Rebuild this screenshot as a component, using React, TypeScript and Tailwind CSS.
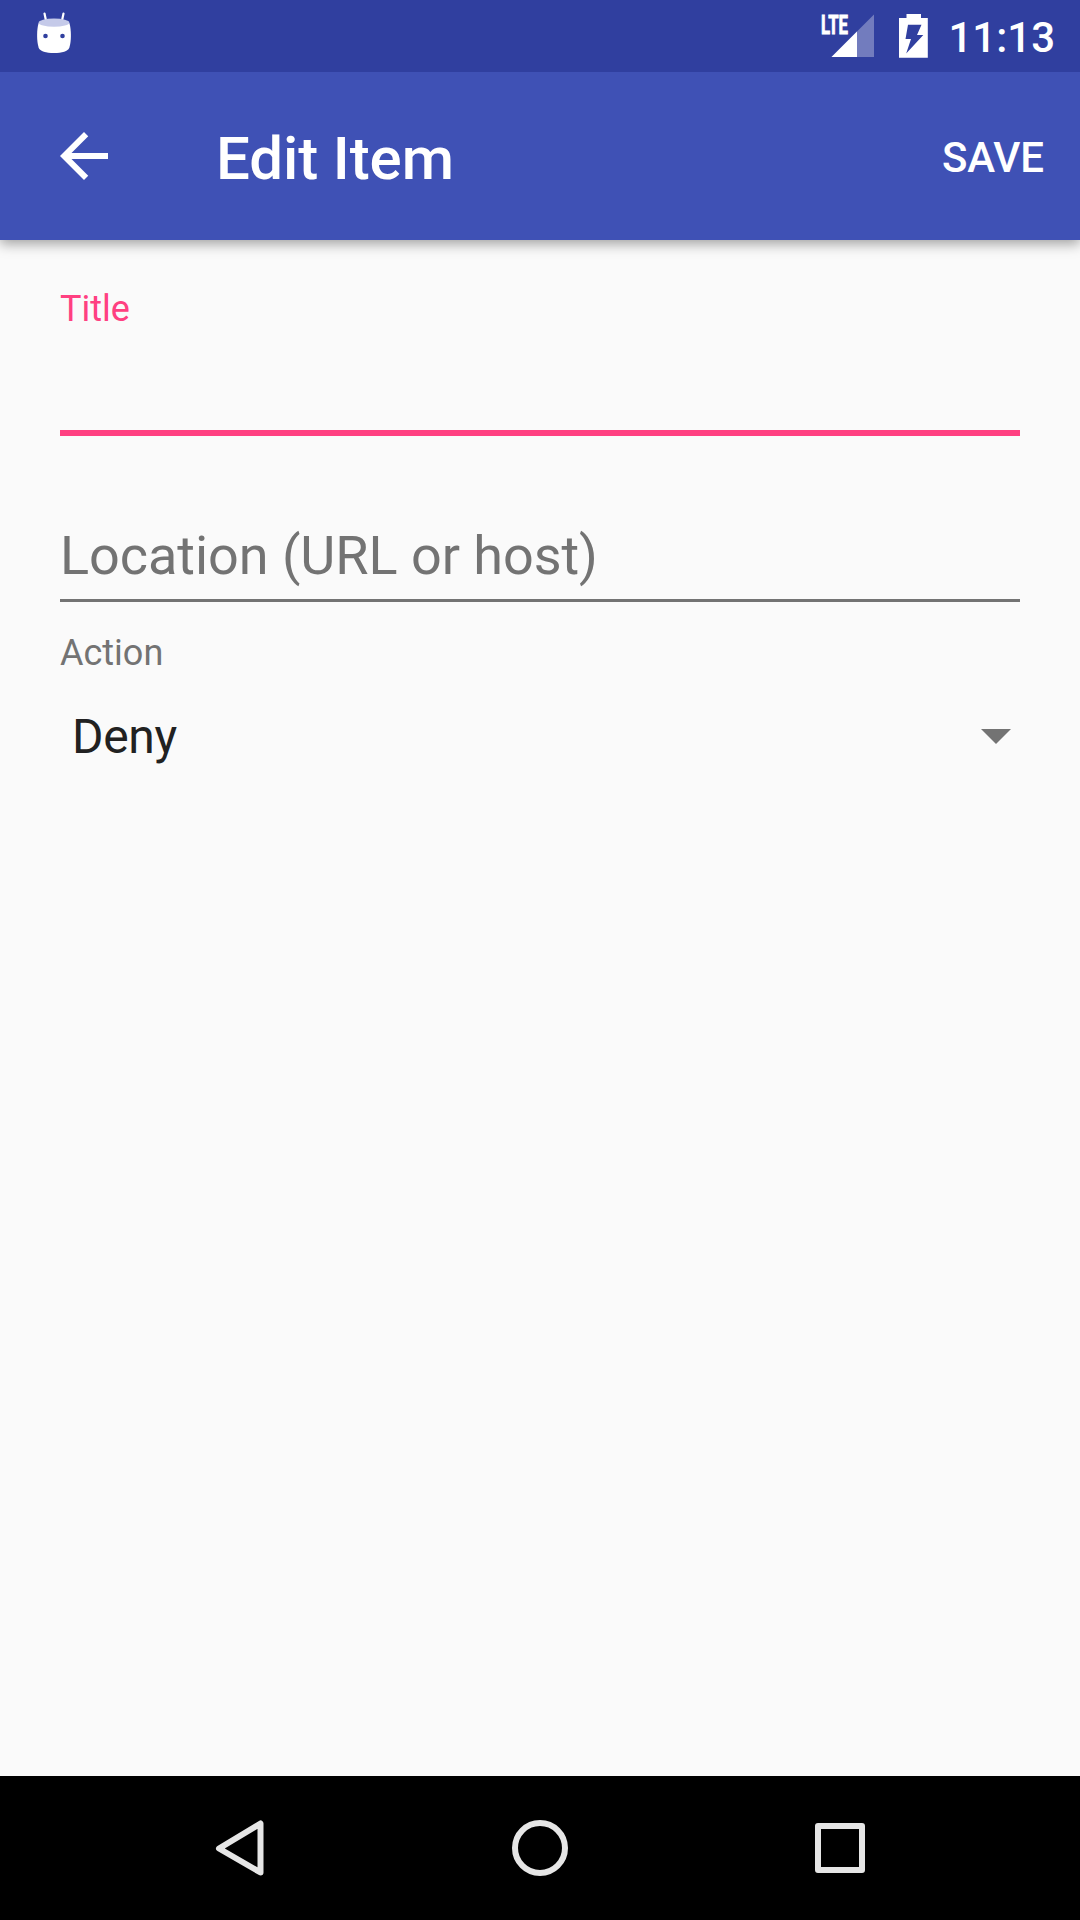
import React from "react";

function StatusBar() {
  return (
    <div className="z-20 flex h-[72px] shrink-0 items-start bg-[#303f9f]">
      <svg className="h-[72px] w-[120px]" viewBox="0 0 120 72" fill="none">
        <path d="M44.5 13.5 46.5 23M63.5 13.5 61.5 23" stroke="#fff" strokeWidth="2.2" strokeLinecap="round" />
        <path d="M38.6 23C36.6 30 36.6 41 38.6 47.5 40 51.500 46 53 54 53s14-1.500 15.400-5.500C71.400 41 71.400 30 69.400 23Z" fill="#fff" />
        <ellipse cx="54" cy="22.700" rx="15.400" ry="4.100" fill="#c5cae9" />
        <circle cx="45.500" cy="36" r="2.300" fill="#303f9f" />
        <circle cx="62.500" cy="36" r="2.300" fill="#303f9f" />
      </svg>
      <svg className="ml-auto h-[72px] w-[134px]" viewBox="810 0 134 72">
        <path d="M874 14.500V57H831.500Z" fill="#fff" fillOpacity=".32" />
        <path d="M857 31.500V57H831.500Z" fill="#fff" />
        <text x="821" y="33.500" fill="#fff" stroke="#fff" strokeWidth="0.9" fontFamily="Roboto" fontWeight="700" fontSize="25.500" textLength="27" lengthAdjust="spacingAndGlyphs">LTE</text>
        <path d="M906.500 14h14.500v4h6.800v39.800h-28.800V18h7.500Z" fill="#fff" />
        <path d="M908 24.700h13.500L917 35h6.300L906.200 53.500 911 39h-5.500Z" fill="#303f9f" />
      </svg>
      <span className="mt-[13px] mr-[25px] w-[111px] text-right text-[42px] leading-[50px] font-medium">11:13</span>
    </div>
  );
}

function AppBar() {
  return (
    <header className="z-10 flex h-[168px] shrink-0 items-center bg-[#3f51b5] pr-[36px] pl-[48px] shadow-[0_4px_12px_rgba(0,0,0,0.36)]">
      <button aria-label="Back" className="h-[72px] w-[72px]">
        <svg viewBox="0 0 24 24" className="h-[72px] w-[72px]" fill="#fff">
          <path d="M20 11H7.830l5.590-5.590L12 4l-8 8 8 8 1.410-1.410L7.830 13H20v-2z" />
        </svg>
      </button>
      <h1 className="ml-[96px] pt-[6px] text-[60px] leading-[70px] font-medium tracking-[-0.1px]">Edit Item</h1>
      <button className="ml-auto pt-[3px] text-[42px] leading-[50px] font-medium tracking-[-0.1px]">SAVE</button>
    </header>
  );
}

function EditForm() {
  return (
    <main className="flex grow flex-col px-[60px] pt-[47px] text-[#737373]">
      <label className="h-[143px] text-[36px] leading-[44px] text-[#ff4081]">Title</label>
      <div className="h-[6px] bg-[#ff4081]" />
      <div className="mt-[88px] h-[75px] text-[54px] leading-[64px] tracking-[-0.05px]">Location (URL or host)</div>
      <div className="h-[3px] bg-[#737373]" />
      <label className="mt-[29px] text-[36px] leading-[44px]">Action</label>
      <div className="mt-[34px] flex h-[56px] items-start justify-between pr-[9px] pl-[12px]">
        <span className="text-[48px] leading-[56px] tracking-[-0.3px] text-[#212121]">Deny</span>
        <svg viewBox="0 0 30 15" className="mt-[20px] h-[15px] w-[30px]" fill="#737373">
          <path d="M0 0h30L15 15Z" />
        </svg>
      </div>
    </main>
  );
}

function NavBar() {
  return (
    <nav className="flex h-[144px] shrink-0 items-center justify-center gap-[180px] bg-black">
      <svg viewBox="180 1788 120 120" className="h-[120px] w-[120px]" fill="none" stroke="#e6e6e6" strokeWidth="6" strokeLinejoin="round">
        <path d="M219 1848.500 260.500 1823.500V1872.500Z" />
      </svg>
      <svg viewBox="480 1788 120 120" className="h-[120px] w-[120px]" fill="none" stroke="#e6e6e6" strokeWidth="6">
        <circle cx="540" cy="1848" r="25" />
      </svg>
      <svg viewBox="780 1788 120 120" className="h-[120px] w-[120px]" fill="none" stroke="#e6e6e6" strokeWidth="6" strokeLinejoin="round">
        <path d="M818 1826h44v44h-44Z" />
      </svg>
    </nav>
  );
}

export default function App() {
  return (
    <div className="flex h-[1920px] w-[1080px] flex-col overflow-hidden bg-[#fafafa] font-['Roboto',sans-serif] text-white">
      <StatusBar />
      <AppBar />
      <EditForm />
      <NavBar />
    </div>
  );
}
